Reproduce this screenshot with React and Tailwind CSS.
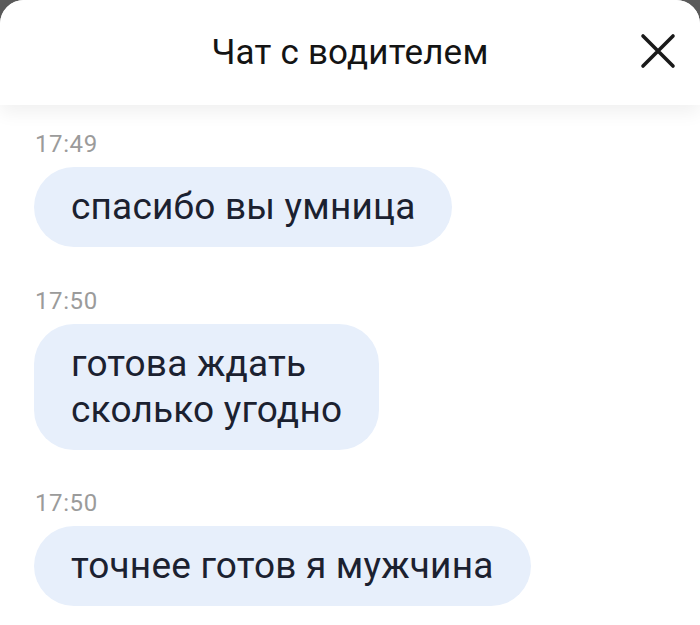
import React from "react";

const messages = [
  { time: "17:49", lines: ["спасибо вы умница"] },
  { time: "17:50", lines: ["готова ждать", "сколько угодно"] },
  { time: "17:50", lines: ["точнее готов я мужчина"] },
];

function CloseIcon() {
  return (
    <svg width="36" height="36" viewBox="0 0 36 36" fill="none">
      <path
        d="M3 3L33 33M33 3L3 33"
        stroke="#1a1a1a"
        strokeWidth="3.6"
        strokeLinecap="round"
      />
    </svg>
  );
}

export default function App() {
  return (
    <div
      className="w-[700px] h-[625px] bg-[#5b5b5b] overflow-hidden"
      style={{ fontFamily: "Roboto, 'Noto Sans', sans-serif" }}
    >
      <div className="h-full bg-white rounded-t-[24px] flex flex-col">
        {/* header */}
        <header className="relative h-[105px] shrink-0 flex items-center justify-center bg-white shadow-[0_8px_18px_rgba(0,0,0,0.06)] rounded-t-[24px] z-10">
          <h1 className="text-[35px] leading-none text-[#141414] font-normal tracking-[0.2px]">
            Чат с водителем
          </h1>
          <button className="absolute right-[24px] top-[33px]">
            <CloseIcon />
          </button>
        </header>

        {/* messages */}
        <div className="flex flex-col px-[34px] pt-[27px]">
          {messages.map((m, i) => (
            <div key={i} className={i === 0 ? "" : "mt-[41.5px]"}>
              <div className="text-[24px] leading-none text-[#9b9b9b] tracking-[0.6px] pl-[1px]">
                {m.time}
              </div>
              <div className="inline-block mt-[11px] bg-[#e7effb] rounded-[40px] pl-[37px] pr-[37px] py-[17px]">
                {m.lines.map((line, j) => (
                  <div
                    key={j}
                    className="text-[37px] leading-[46px] text-[#1b2130] tracking-[0.2px] whitespace-nowrap"
                  >
                    {line}
                  </div>
                ))}
              </div>
            </div>
          ))}
        </div>
      </div>
    </div>
  );
}
